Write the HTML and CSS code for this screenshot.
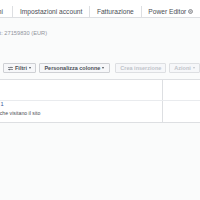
FILE: index.html
```html
<!DOCTYPE html>
<html lang="it">
<head>
<meta charset="utf-8">
<link rel="stylesheet" href="styles.css">
</head>
<body>
<nav class="tabs">
  <a class="tab tab-first">Gestione inserzioni</a>
  <a class="tab">Impostazioni account</a>
  <a class="tab">Fatturazione</a>
  <a class="tab">Power Editor <svg class="pe-icon" viewBox="0 0 10 10"><circle cx="5" cy="5" r="4" fill="none" stroke="#4b4f56" stroke-width="1.2"/><path d="M3 4h4M3 6h4" stroke="#4b4f56" stroke-width="1.1"/></svg></a>
</nav>
<div class="account">ID account: 27159830 (EUR)</div>
<div class="toolbar">
  <button class="btn"><svg class="filter-icon" viewBox="0 0 10 10"><path d="M0 3h10M0 7h10" stroke="#4b4f56" stroke-width="1.2"/><path d="M6 1.5v3M3 5.5v3" stroke="#4b4f56" stroke-width="1.2"/></svg>Filtri<span class="caret"></span></button>
  <button class="btn btn-wide">Personalizza colonne<span class="caret"></span></button>
  <button class="btn btn-disabled btn-gap">Crea inserzione</button>
  <button class="btn btn-disabled">Azioni<span class="caret"></span></button>
</div>
<div class="table">
  <div class="row row-head">
    <div class="cell cell-main"></div>
    <div class="cell cell-side"></div>
  </div>
  <div class="row">
    <div class="cell cell-main">
      <div class="name">Pubblico 1</div>
      <div class="desc">Persone che visitano il sito</div>
    </div>
    <div class="cell cell-side"></div>
  </div>
</div>
</body>
</html>
```
FILE: styles.css
```css
html, body {
  margin: 0;
  padding: 0;
}
body {
  width: 200px;
  height: 200px;
  overflow: hidden;
  background: #fafbfb;
  font-family: "Liberation Sans", Arial, sans-serif;
  color: #4b4f56;
}
.tabs {
  display: flex;
  align-items: center;
  padding-top: 6px;
  height: 11px;
  background: #fff;
  border-bottom: 1px solid #dddfe2;
  white-space: nowrap;
}
.tab {
  font-size: 6.65px;
  line-height: 11px;
  padding: 0 7px 0 6.5px;
  border-left: 1px solid #dddfe2;
  display: flex;
  align-items: center;
  color: #4b4f56;
}
.tab-first {
  border-left: none;
  margin-left: -53.5px;
  padding: 0 9.5px 0 0;
}
.pe-icon {
  width: 5px;
  height: 5px;
  margin-left: 2px;
}
.account {
  margin-top: 11px;
  margin-left: -26px;
  font-size: 5.7px;
  line-height: 8px;
  color: #90949c;
  white-space: nowrap;
}
.toolbar {
  display: flex;
  gap: 3px;
  margin-top: 26px;
  padding: 0 0 6px 3px;
  white-space: nowrap;
}
.btn {
  display: flex;
  align-items: center;
  height: 10px;
  padding: 0 4px;
  margin: 0;
  background: #f6f7f9;
  border: 1px solid #ced0d4;
  border-radius: 1px;
  font-family: "Liberation Sans", Arial, sans-serif;
  font-size: 5.5px;
  font-weight: bold;
  color: #4b4f56;
  box-sizing: border-box;
}
.btn-wide {
  padding: 0 5px 0 4.5px;
}
.btn-gap {
  margin-left: 2px;
}
.btn-disabled {
  color: #bec3c9;
  border-color: #dddfe2;
  background: #f6f7f9;
}
.filter-icon {
  width: 5px;
  height: 5px;
  margin-right: 2px;
}
.caret {
  display: inline-block;
  width: 0;
  height: 0;
  margin-left: 2px;
  border-left: 1.5px solid transparent;
  border-right: 1.5px solid transparent;
  border-top: 2px solid #4b4f56;
}
.btn-disabled .caret {
  border-top-color: #bec3c9;
}
.table {
  background: #fff;
  border-top: 1px solid #dddfe2;
  border-bottom: 1px solid #dddfe2;
}
.row {
  display: grid;
  grid-template-columns: 162px 1fr;
}
.row-head {
  height: 20px;
  border-bottom: 1px solid #e9ebee;
}
.row + .row {
  height: 21px;
}
.cell-side {
  border-left: 1px solid #dddfe2;
}
.cell-main {
  overflow: hidden;
  white-space: nowrap;
}
.name {
  margin-left: -23px;
  font-size: 5.7px;
  line-height: 6px;
  color: #365899;
}
.desc {
  margin-left: -21px;
  margin-top: 2.5px;
  font-size: 5.2px;
  line-height: 7px;
  color: #4b4f56;
}
```
